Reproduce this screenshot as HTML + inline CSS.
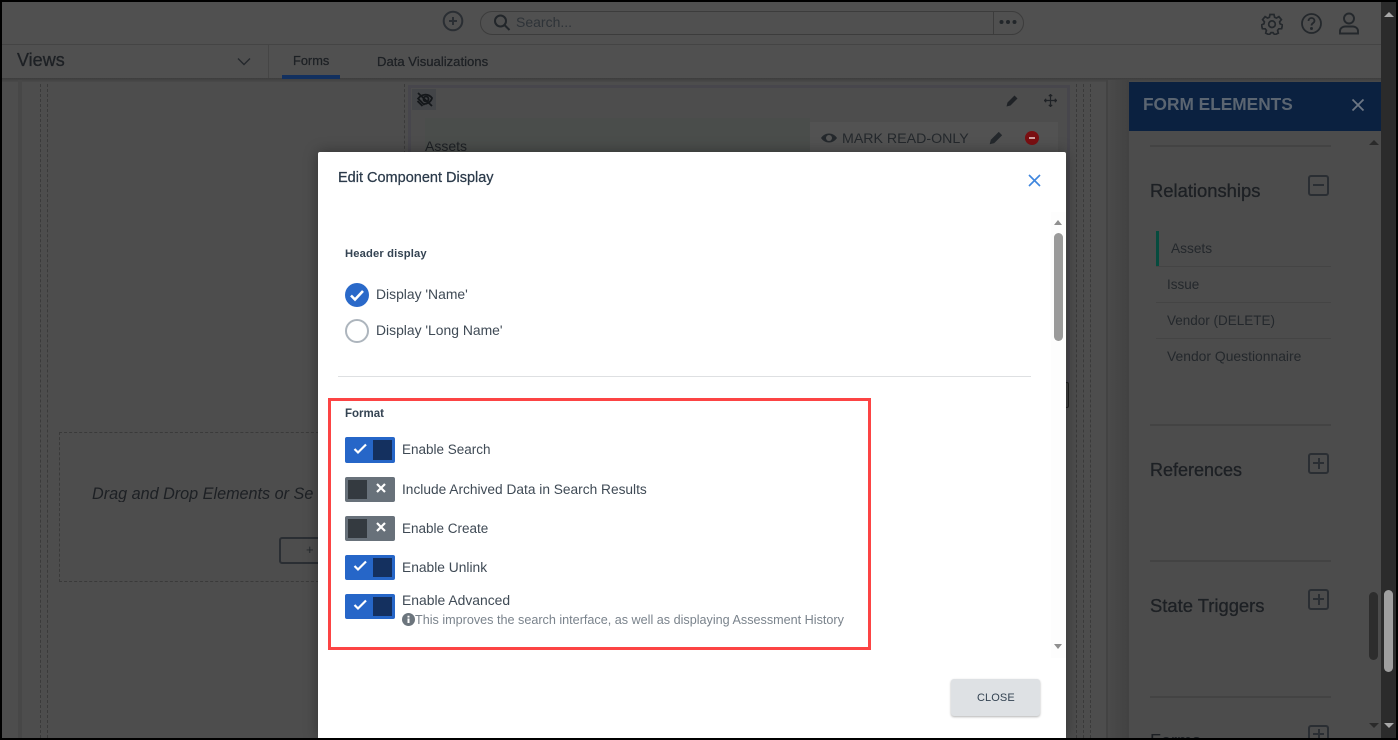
<!DOCTYPE html>
<html><head><meta charset="utf-8">
<style>
html,body{margin:0;padding:0;background:#000}
#p{position:relative;width:1398px;height:740px;overflow:hidden;background:#4d4d4d;font-family:"Liberation Sans",sans-serif;color:#3a4450}
#p div,#p span,#p svg{position:absolute}
.t{white-space:nowrap;line-height:1}
.d{color:#1d2024}
.h{-webkit-text-stroke:.3px #1d2024}
.vd{border-left:1px dashed #3a3a3a;width:0;top:84px;height:654px}
.tg{width:50px;height:25px;border-radius:2px;left:345px}
.tg i{position:absolute;top:3px;width:19px;height:19px;display:block}
.on{background:#2666c8}.on i{left:28px;background:#14305f}
.off{background:#68717a}.off i{left:3px;background:#343a40}
.tl{left:402px;font-size:13.5px;color:#3f4a55}
</style></head><body>
<div id="p">
<!-- top bars -->
<div style="left:2px;top:2px;width:1379px;height:42px;background:#505050"></div>
<div style="left:2px;top:44px;width:1379px;height:1px;background:#444"></div>
<div style="left:2px;top:45px;width:1379px;height:33px;background:#505050"></div>
<div style="left:2px;top:78px;width:1379px;height:4px;background:linear-gradient(#3d3d3d,#4a4a4a)"></div>
<svg style="left:442px;top:10px" width="22" height="22" viewBox="0 0 22 22" fill="none" stroke="#2a2e33" stroke-width="2"><circle cx="11" cy="11" r="9.300"/><path d="M11 7v8M7 11h8"/></svg>
<div style="left:480px;top:11px;width:542px;height:22px;border:1px solid #3c3c3c;border-radius:12px"></div>
<div style="left:993px;top:12px;width:1px;height:22px;background:#3c3c3c"></div>
<svg style="left:492px;top:13px" width="20" height="20" viewBox="0 0 20 20" fill="none" stroke="#22262a" stroke-width="2"><circle cx="8.500" cy="8" r="5.500"/><path d="M12.500 12l5 5"/></svg>
<div class="t" style="left:516px;top:15px;font-size:14px;color:#2e3338">Search...</div>
<svg style="left:998px;top:18px" width="20" height="8" viewBox="0 0 20 8" fill="#22262a"><circle cx="3.500" cy="4" r="2"/><circle cx="10" cy="4" r="2"/><circle cx="16.500" cy="4" r="2"/></svg>
<svg style="left:1261px;top:13px" width="22" height="22" viewBox="0 0 22 22" fill="none" stroke="#24282c" stroke-width="1.700"><path d="M9 1.500h4l.6 2.800 1.800.8 2.500-1.500 2.500 3-1.800 2.200.4 2 2.500 1.100-.9 3.800-2.800.1-1.200 1.600.7 2.700-3.600 1.700-1.700-2.200h-2l-1.700 2.200-3.600-1.700.7-2.700-1.200-1.600-2.800-.1-.9-3.800 2.500-1.100.4-2L1.600 6.600l2.500-3 2.500 1.500 1.800-.8z"/><circle cx="11" cy="11.200" r="3.300"/></svg>
<svg style="left:1300px;top:12px" width="23" height="23" viewBox="0 0 23 23" fill="none" stroke="#24282c" stroke-width="1.800"><circle cx="11.500" cy="11.500" r="9.500"/><path d="M8.500 9c0-4 6-4 6 0 0 2-3 2-3 4.500"/><circle cx="11.500" cy="16.500" r=".6" fill="#24282c"/></svg>
<svg style="left:1338px;top:12px" width="22" height="23" viewBox="0 0 22 23" fill="none" stroke="#24282c" stroke-width="1.900"><circle cx="11" cy="6.500" r="5"/><path d="M2 21.500v-2.500c0-3 3-4.500 5-4.500h8c2 0 5 1.500 5 4.500v2.500z"/></svg>
<div class="t d h" style="left:17px;top:51px;font-size:18px">Views</div>
<svg style="left:236px;top:56px" width="16" height="11" viewBox="0 0 16 11" fill="none" stroke="#24282c" stroke-width="1.400"><path d="M2 2.500l6 6 6-6"/></svg>
<div style="left:268px;top:45px;width:1px;height:33px;background:#454545"></div>
<div class="t d" style="left:293px;top:55px;font-size:12.800px;-webkit-text-stroke:.25px #1d2024">Forms</div>
<div style="left:282px;top:75px;width:58px;height:4px;background:#12305f"></div>
<div class="t d" style="left:377px;top:55px;font-size:13.100px;-webkit-text-stroke:.25px #1d2024">Data Visualizations</div>
<!-- dashed columns -->
<div style="left:18px;top:80px;width:4px;height:658px;background:#474747"></div>
<div class="vd" style="left:40px"></div><div class="vd" style="left:47px"></div>
<div class="vd" style="left:404px;height:70px"></div>
<div class="vd" style="left:1076px"></div><div class="vd" style="left:1083px"></div><div class="vd" style="left:1090px"></div>
<div class="vd" style="left:1110px"></div>
<div style="left:1106px;top:80px;width:2px;height:658px;background:#434343"></div>
<div style="left:1108px;top:80px;width:21px;height:658px;background:linear-gradient(90deg,#4a4a4a,#424242)"></div>
<!-- center card -->
<div style="left:408px;top:85px;width:662px;height:298px;border:3px solid #47464c;box-sizing:border-box"></div>
<div style="left:412px;top:89px;width:24px;height:21px;background:#434548"></div>
<svg style="left:416px;top:90px" width="18" height="18" viewBox="0 0 18 18" fill="none" stroke="#14171a" stroke-width="1.800"><path d="M2 9c3-5 10-6 14-1-1 4-5 6-8 6"/><circle cx="10" cy="9" r="2.500"/><path d="M2 3l14 13M1.500 8l7 7M1.500 11l5 5"/></svg>
<div style="left:425px;top:118px;width:385px;height:34px;background:#4a4d4b"></div>
<div style="left:810px;top:122px;width:248px;height:30px;background:#525252"></div>
<div class="t d" style="left:425px;top:139px;font-size:14px">Assets</div>
<svg style="left:1005px;top:93px" width="15" height="15" viewBox="0 0 15 15" fill="#1f2226"><path d="M1.500 13.500l1-4 7-7 3 3-7 7z"/></svg>
<svg style="left:1044px;top:94px" width="13" height="13" viewBox="0 0 13 13" fill="none" stroke="#1f2226" stroke-width="1.200"><path d="M6.500 .5v12M.5 6.500h12M4.800 2.200l1.700-1.700 1.700 1.700M4.800 10.800l1.700 1.700 1.700-1.700M2.200 4.800L.5 6.500l1.700 1.700M10.800 4.800l1.700 1.700-1.700 1.700"/></svg>
<svg style="left:821px;top:130px" width="16" height="16" viewBox="0 0 16 16"><path d="M0 8c4-6 12-6 16 0-4 6-12 6-16 0z" fill="#24282c"/><circle cx="8" cy="8" r="3" fill="#555"/></svg>
<div class="t" style="left:842px;top:132px;font-size:14.200px;color:#24282c">MARK READ-ONLY</div>
<svg style="left:988px;top:129px" width="17" height="17" viewBox="0 0 15 15" fill="#24282c"><path d="M1.500 13.500l1-4 7-7 3 3-7 7z"/></svg>
<div style="left:1025px;top:131px;width:14px;height:14px;border-radius:50%;background:#7a0f12"></div>
<div style="left:1029px;top:137px;width:6px;height:2px;background:#cfa0a0"></div>
<div style="left:1058px;top:382px;width:11px;height:26px;border:1px solid #1f1f1f;border-radius:2px;box-sizing:border-box;background:#3e3e3e"></div>
<!-- drop zone left -->
<div style="left:59px;top:432px;width:265px;height:150px;border:1px dashed #3a3a3a;box-sizing:border-box"></div>
<div class="t d" style="left:92px;top:486px;font-size:16.200px;font-style:italic;width:226px;overflow:hidden">Drag and Drop Elements or Se</div>
<div style="left:279px;top:537px;width:50px;height:27px;border:2px solid #2a2e33;border-radius:3px;box-sizing:border-box"></div>
<div class="t" style="left:306px;top:543px;font-size:13px;color:#24282c">+</div>
<!-- right panel -->
<div style="left:1129px;top:82px;width:252px;height:656px;background:#4c4c4c"></div>
<div style="left:1129px;top:82px;width:252px;height:49px;background:#0b2140"></div>
<div class="t" style="left:1143px;top:96px;font-size:17.300px;font-weight:bold;color:#5b6571">FORM ELEMENTS</div>
<svg style="left:1351px;top:98px" width="14" height="14" viewBox="0 0 14 14" stroke="#6d7784" stroke-width="1.800"><path d="M1.500 1.500l11 11M12.500 1.500l-11 11"/></svg>
<div style="left:1150px;top:145px;width:181px;height:2px;background:#434343"></div>
<div class="t d h" style="left:1150px;top:182px;font-size:18.400px">Relationships</div>
<div style="left:1308px;top:175px;width:21px;height:21px;border:2px solid #2a2e33;border-radius:3px;box-sizing:border-box"></div>
<div style="left:1313px;top:184px;width:11px;height:2px;background:#2a2e33"></div>
<div style="left:1156px;top:231px;width:3px;height:36px;background:#064b3e"></div>
<div class="t" style="left:1171px;top:242px;font-size:13.700px;color:#24282c">Assets</div>
<div style="left:1156px;top:266px;width:175px;height:1px;background:#444"></div>
<div class="t" style="left:1167px;top:278px;font-size:13.500px;color:#24282c">Issue</div>
<div style="left:1156px;top:302px;width:175px;height:1px;background:#444"></div>
<div class="t" style="left:1167px;top:314px;font-size:13.500px;color:#24282c">Vendor (DELETE)</div>
<div style="left:1156px;top:338px;width:175px;height:1px;background:#444"></div>
<div class="t" style="left:1167px;top:350px;font-size:13.900px;color:#24282c">Vendor Questionnaire</div>
<div style="left:1150px;top:424px;width:181px;height:2px;background:#434343"></div>
<div class="t d h" style="left:1150px;top:461px;font-size:18px">References</div>
<div style="left:1308px;top:453px;width:21px;height:21px;border:2px solid #2a2e33;border-radius:3px;box-sizing:border-box"></div>
<div style="left:1313px;top:462px;width:11px;height:2px;background:#2a2e33"></div><div style="left:1317.500px;top:458px;width:2px;height:11px;background:#2a2e33"></div>
<div style="left:1150px;top:560px;width:181px;height:2px;background:#434343"></div>
<div class="t d h" style="left:1150px;top:597px;font-size:18.400px">State Triggers</div>
<div style="left:1308px;top:589px;width:21px;height:21px;border:2px solid #2a2e33;border-radius:3px;box-sizing:border-box"></div>
<div style="left:1313px;top:598px;width:11px;height:2px;background:#2a2e33"></div><div style="left:1317.500px;top:594px;width:2px;height:11px;background:#2a2e33"></div>
<div style="left:1150px;top:696px;width:181px;height:2px;background:#434343"></div>
<div style="height:6px;left:1150px;top:732px;width:100px;overflow:hidden"><span class="t d" style="left:0;top:0;font-size:18px">Forms</span></div>
<div style="left:1308px;top:725px;width:21px;height:13px;border:2px solid #2a2e33;border-bottom:0;border-radius:3px 3px 0 0;box-sizing:border-box"></div>
<div style="left:1313px;top:733px;width:11px;height:2px;background:#2a2e33"></div><div style="left:1317.500px;top:729px;width:2px;height:9px;background:#2a2e33"></div>
<!-- inner scrollbar -->
<div style="left:1369px;top:140px;width:0;height:0;border:5px solid transparent;border-top:0;border-bottom:5px solid #2a2a2a"></div>
<div style="left:1369px;top:592px;width:9px;height:68px;border-radius:5px;background:#2d2d2d"></div>
<div style="left:1369px;top:723px;width:0;height:0;border:5px solid transparent;border-bottom:0;border-top:5px solid #2a2a2a"></div>
<!-- outer scrollbar -->
<div style="left:1381px;top:2px;width:15px;height:736px;background:#2b2b2b"></div>
<div style="left:1384px;top:12px;width:0;height:0;border:5px solid transparent;border-top:0;border-bottom:5px solid #a8a8a8"></div>
<div style="left:1384px;top:590px;width:9px;height:82px;border-radius:5px;background:#9f9f9f"></div>
<div style="left:1384px;top:723px;width:0;height:0;border:5px solid transparent;border-bottom:0;border-top:5px solid #a8a8a8"></div>
<!-- modal -->
<div style="left:318px;top:152px;width:748px;height:586px;background:#fff;border-radius:2px 2px 0 0;box-shadow:0 0 14px rgba(0,0,0,.35)"></div>
<div class="t" style="left:338px;top:171px;font-size:14.500px;color:#2b3a4a;-webkit-text-stroke:.25px #2b3a4a">Edit Component Display</div>
<svg style="left:1027px;top:173px" width="15" height="15" viewBox="0 0 15 15" stroke="#3e86de" stroke-width="1.600"><path d="M2 2l11 11M13 2L2 13"/></svg>
<div style="left:1051px;top:212px;width:15px;height:446px;background:#fdfdfd"></div>
<div style="left:1054px;top:220px;width:0;height:0;border:4.500px solid transparent;border-top:0;border-bottom:5px solid #8f8f8f"></div>
<div style="left:1054px;top:233px;width:9px;height:108px;border-radius:5px;background:#9a9a9a"></div>
<div style="left:1054px;top:644px;width:0;height:0;border:4.500px solid transparent;border-bottom:0;border-top:5px solid #8f8f8f"></div>
<div class="t" style="left:345px;top:249px;font-size:11.200px;font-weight:bold;color:#344352;letter-spacing:.15px">Header display</div>
<svg style="left:345px;top:283px" width="24" height="24" viewBox="0 0 24 24"><circle cx="12" cy="12" r="12" fill="#2a69c9"/><path d="M6 12.500l4 4 8-8.500" fill="none" stroke="#fff" stroke-width="2.600"/></svg>
<div class="t tl" style="left:376px;top:288px;font-size:13.900px">Display 'Name'</div>
<div style="left:345px;top:319px;width:24px;height:24px;border:2px solid #adb5bd;border-radius:50%;box-sizing:border-box"></div>
<div class="t tl" style="left:376px;top:324px;font-size:13.900px">Display 'Long Name'</div>
<div style="left:338px;top:376px;width:693px;height:1px;background:#dee0e2"></div>
<!-- red box -->
<div style="left:328px;top:398px;width:543px;height:252px;border:3.500px solid #fc4444;box-sizing:border-box"></div>
<div class="t" style="left:345px;top:409px;font-size:11.500px;font-weight:bold;color:#344352">Format</div>
<div class="tg on" style="top:437px;height:26px"><i style="top:3px;height:20px"></i></div>
<svg style="left:353px;top:443px" width="15" height="12" viewBox="0 0 15 12" fill="none" stroke="#fff" stroke-width="2.200"><path d="M1.500 6l3.500 3.500 8-8"/></svg>
<div class="t tl" style="top:443px">Enable Search</div>
<div class="tg off" style="top:477px"></div><div style="left:348px;top:480px;width:19px;height:19px;background:#343a40"></div>
<svg style="left:376px;top:483px" width="10" height="10" viewBox="0 0 10 10" stroke="#fff" stroke-width="2.200"><path d="M1 1l8 8M9 1l-8 8"/></svg>
<div class="t tl" style="top:483px;font-size:13.720px">Include Archived Data in Search Results</div>
<div class="tg off" style="top:516px"></div><div style="left:348px;top:519px;width:19px;height:19px;background:#343a40"></div>
<svg style="left:376px;top:522px" width="10" height="10" viewBox="0 0 10 10" stroke="#fff" stroke-width="2.200"><path d="M1 1l8 8M9 1l-8 8"/></svg>
<div class="t tl" style="top:522px">Enable Create</div>
<div class="tg on" style="top:555px"><i></i></div>
<svg style="left:353px;top:560px" width="15" height="12" viewBox="0 0 15 12" fill="none" stroke="#fff" stroke-width="2.200"><path d="M1.500 6l3.500 3.500 8-8"/></svg>
<div class="t tl" style="top:561px;font-size:13.800px">Enable Unlink</div>
<div class="tg on" style="top:594px"><i></i></div>
<svg style="left:353px;top:599px" width="15" height="12" viewBox="0 0 15 12" fill="none" stroke="#fff" stroke-width="2.200"><path d="M1.500 6l3.500 3.500 8-8"/></svg>
<div class="t tl" style="top:594px;font-size:13.900px">Enable Advanced</div>
<svg style="left:402px;top:613px" width="13" height="13" viewBox="0 0 13 13"><circle cx="6.500" cy="6.500" r="6.500" fill="#6c757d"/><path d="M5.500 5.500h2v4.500h-2zM5.500 2.700h2v1.800h-2z" fill="#fff"/></svg>
<div class="t" style="left:415px;top:614px;font-size:12.620px;color:#7a838c">This improves the search interface, as well as displaying Assessment History</div>
<div style="left:951px;top:679px;width:89px;height:37px;background:#dee1e4;border-radius:3px;box-shadow:0 1px 2px rgba(0,0,0,.3)"></div>
<div class="t" style="left:977px;top:693px;font-size:11px;color:#344352;letter-spacing:.1px">CLOSE</div>
<!-- black frame -->
<div style="left:0;top:0;width:1398px;height:2px;background:#000"></div>
<div style="left:0;top:738px;width:1398px;height:2px;background:#000"></div>
<div style="left:0;top:0;width:2px;height:740px;background:#000"></div>
<div style="left:1396px;top:0;width:2px;height:740px;background:#000"></div>
</div>
</body></html>
